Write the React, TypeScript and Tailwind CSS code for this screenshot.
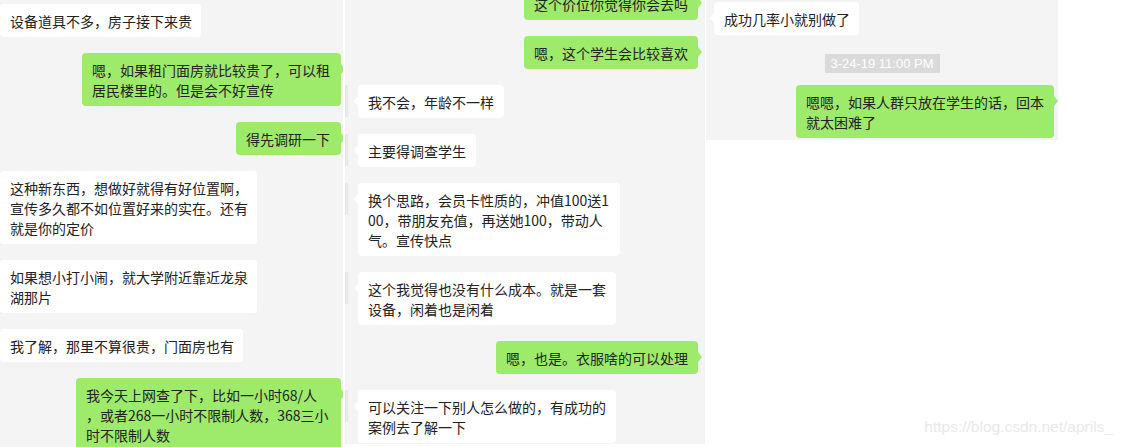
type Msg = {
    side: "left" | "right",
    width: number,
    lines: string[],
}

const col1: Msg[] = [
    { side: "left", width: 201, lines: ["设备道具不多，房子接下来贵"] },
    { side: "right", width: 259, lines: ["嗯，如果租门面房就比较贵了，可以租", "居民楼里的。但是会不好宣传"] },
    { side: "right", width: 105, lines: ["得先调研一下"] },
    { side: "left", width: 257, lines: ["这种新东西，想做好就得有好位置啊，", "宣传多久都不如位置好来的实在。还有", "就是你的定价"] },
    { side: "left", width: 257, lines: ["如果想小打小闹，就大学附近靠近龙泉", "湖那片"] },
    { side: "left", width: 243, lines: ["我了解，那里不算很贵，门面房也有"] },
    { side: "right", width: 265, lines: ["我今天上网查了下，比如一小时68/人", "，或者268一小时不限制人数，368三小", "时不限制人数"] },
]

const col2: Msg[] = [
    { side: "right", width: 174, lines: ["这个价位你觉得你会去吗"] },
    { side: "right", width: 174, lines: ["嗯，这个学生会比较喜欢"] },
    { side: "left", width: 146, lines: ["我不会，年龄不一样"] },
    { side: "left", width: 118, lines: ["主要得调查学生"] },
    { side: "left", width: 262, lines: ["换个思路，会员卡性质的，冲值100送1", "00，带朋友充值，再送她100，带动人", "气。宣传快点"] },
    { side: "left", width: 258, lines: ["这个我觉得也没有什么成本。就是一套", "设备，闲着也是闲着"] },
    { side: "right", width: 202, lines: ["嗯，也是。衣服啥的可以处理"] },
    { side: "left", width: 258, lines: ["可以关注一下别人怎么做的，有成功的", "案例去了解一下"] },
]

const Bubble = ({ side, width, lines }: Msg) => {
    const green = side === "right"
    return (
        <div
            style={{ width }}
            className={`relative rounded-[4px] px-[10px] pt-[7px] pb-[6px] text-[14px] leading-[20px] text-[#222] whitespace-nowrap ${green ? "bg-[#9eea6a]" : "bg-white"}`}
        >
            {lines.map((l, i) => (
                <div key={i}>{l}</div>
            ))}

            {/* tail */}
            {green ? (
                <span className="absolute top-[11px] right-[-4px] border-y-[5px] border-y-transparent border-l-[4px] border-l-[#9eea6a]" />
            ) : (
                <span className="absolute top-[11px] left-[-4px] border-y-[5px] border-y-transparent border-r-[4px] border-r-white" />
            )}
        </div>
    )
}

export default function App() {
    return (
        <div
            className="relative flex items-start w-[1124px] h-[447px] bg-white overflow-hidden"
            style={{ fontFamily: '"Noto Sans CJK SC", "Noto Sans", sans-serif' }}
        >
            {/* column 1 */}
            <div className="w-[343px] h-[447px] bg-[#f4f4f4] overflow-hidden flex flex-col gap-4 pt-[4px]">
                {col1.map((m, i) => (
                    <div key={i} className={`flex ${m.side === "right" ? "justify-end pr-[2px]" : "justify-start"}`}>
                        <Bubble {...m} />
                    </div>
                ))}
            </div>

            {/* column 2 */}
            <div className="ml-[2px] w-[360px] h-[444px] bg-[#f4f4f4] overflow-hidden flex flex-col gap-4">
                {col2.map((m, i) => (
                    <div
                        key={i}
                        className={`flex items-start ${i === 0 ? "-mt-[13px]" : ""} ${m.side === "right" ? "justify-end pr-[7px]" : "justify-start"}`}
                    >
                        {m.side === "left" && <div className="w-[3px] h-[32px] bg-[#e8e8e8] mr-[10px] shrink-0" />}
                        <Bubble {...m} />
                    </div>
                ))}
            </div>

            {/* column 3 */}
            <div className="ml-[1px] w-[352px] h-[140px] bg-[#f4f4f4] overflow-hidden flex flex-col">
                <div className="flex mt-[2px] pl-[8px]">
                    <Bubble side="left" width={145} lines={["成功几率小就别做了"]} />
                </div>
                <div className="flex justify-center mt-[19px]">
                    <div
                        className="w-[115px] h-[19px] bg-[#dadada] text-white text-[13px] leading-[19px] text-center"
                        style={{ fontFamily: '"Liberation Sans", Arial, sans-serif' }}
                    >
                        3-24-19 11:00 PM
                    </div>
                </div>
                <div className="flex justify-end pr-[4px] mt-[12px]">
                    <Bubble side="right" width={258} lines={["嗯嗯，如果人群只放在学生的话，回本", "就太困难了"]} />
                </div>
            </div>

            {/* watermark */}
            <span
                className="absolute right-[11px] top-[416px] text-[15.5px] leading-[22px] text-[#e8e8e8]"
                style={{ fontFamily: '"Liberation Sans", Arial, sans-serif' }}
            >
                https://blog.csdn.net/aprils_
            </span>
        </div>
    )
}
